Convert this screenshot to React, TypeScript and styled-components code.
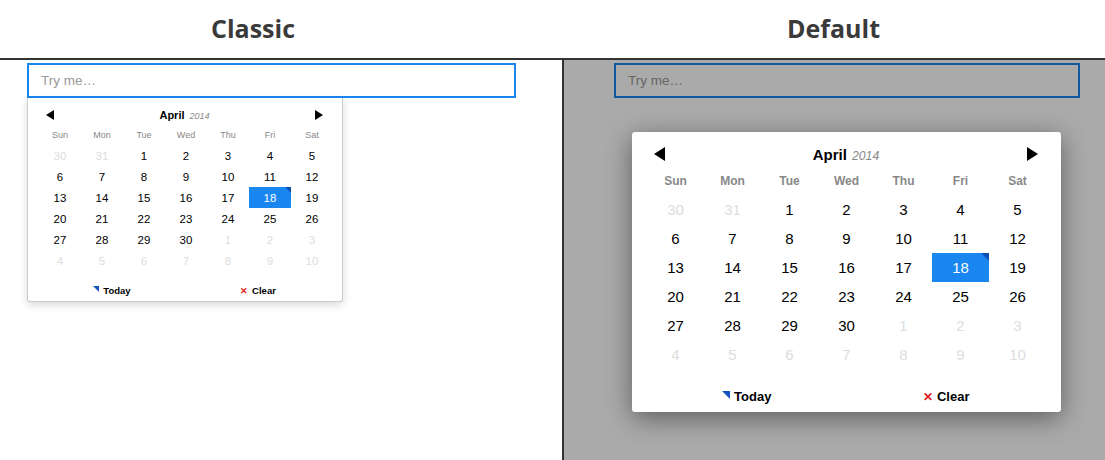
import React from "react";
import styled, { createGlobalStyle } from "styled-components";

const GlobalStyle = createGlobalStyle`
	html, body { margin: 0; padding: 0; background: #fff; }
	body { width: 1105px; height: 460px; overflow: hidden; font-family: "Liberation Sans", Arial, sans-serif; }
`;

type Size = "small" | "large";

// the two variants only differ in scale
const metrics = {
	small: { pad: "7px 11px 8px", head: 11, arrow: 5, week: 9, day: 11.5, cellW: 42, cellH: 21, foot: 9.5, headH: 19, footTop: 14 },
	large: { pad: "10px 15px 8px", head: 15, arrow: 7, week: 12, day: 15, cellW: 57, cellH: 29, foot: 13, headH: 24, footTop: 20 },
};

const Page = styled.div`
	width: 1105px;
	height: 460px;
	display: flex;
	flex-direction: column;
`;

const Titles = styled.header`
	display: grid;
	grid-template-columns: 562px 1fr;
	height: 58px;
	border-bottom: 2px solid #333;
`;

const Title = styled.h1<{ inset?: number }>`
	margin: 0;
	font-family: "Open Sans", sans-serif;
	font-weight: 700;
	font-size: 25px;
	color: #3a3a3a;
	display: flex;
	align-items: center;
	justify-content: center;
	padding: 0 ${(p) => p.inset ?? 0}px 3px 0;
`;

const Panels = styled.main`
	flex: 1;
	display: grid;
	grid-template-columns: 562px 1fr;
`;

const Panel = styled.section<{ dim?: boolean }>`
	position: relative;
	padding: 3px 0 0;
	border-left: ${(p) => (p.dim ? "2px solid #333" : "none")};
	padding-left: ${(p) => (p.dim ? "50px" : "27px")};
	background: #fff;
`;

const Input = styled.div<{ w: number }>`
	box-sizing: border-box;
	width: ${(p) => p.w}px;
	height: 35px;
	border: 2px solid #1a86f0;
	padding: 0 12px;
	display: flex;
	align-items: center;
	font-size: 13.5px;
	color: #999;
`;

const Backdrop = styled.div`
	position: absolute;
	inset: 0;
	background: rgba(0, 0, 0, 0.333);
	display: flex;
	align-items: flex-start;
	padding: 72px 0 0 68px;
`;

const Picker = styled.div<{ size: Size }>`
	box-sizing: border-box;
	background: #fff;
	padding: ${(p) => metrics[p.size].pad};
	${(p) =>
		p.size === "small"
			? `width: 316px; height: 204px; border: 1px solid #ccc; border-top: none; border-radius: 0 0 3px 3px; box-shadow: 0 3px 8px rgba(0,0,0,.15);`
			: `width: 429px; height: 280px; border-radius: 3px; box-shadow: 0 6px 26px rgba(0,0,0,.45);`}
`;

const Head = styled.div<{ size: Size }>`
	display: flex;
	align-items: center;
	justify-content: space-between;
	height: ${(p) => metrics[p.size].headH}px;
	padding: 0 8px 0 7px;
`;

const Arrow = styled.span<{ size: Size; dir: "left" | "right" }>`
	width: 0;
	height: 0;
	border-top: ${(p) => metrics[p.size].arrow}px solid transparent;
	border-bottom: ${(p) => metrics[p.size].arrow}px solid transparent;
	${(p) =>
		p.dir === "left"
			? `border-right: ${metrics[p.size].arrow * 1.6}px solid #000;`
			: `border-left: ${metrics[p.size].arrow * 1.6}px solid #000;`}
`;

const Month = styled.div<{ size: Size }>`
	font-size: ${(p) => metrics[p.size].head}px;
	font-weight: 700;
	color: #000;
	em {
		font-weight: 400;
		color: #888;
		font-size: 0.82em;
		margin-left: 5px;
	}
`;

const Grid = styled.div<{ size: Size }>`
	display: grid;
	grid-template-columns: repeat(7, ${(p) => metrics[p.size].cellW}px);
	grid-auto-rows: ${(p) => metrics[p.size].cellH}px;
`;

const WeekDay = styled.div<{ size: Size }>`
	display: flex;
	align-items: center;
	justify-content: center;
	font-size: ${(p) => metrics[p.size].week}px;
	font-weight: ${(p) => (p.size === "large" ? 700 : 400)};
	color: #888;
`;

const Day = styled.div<{ size: Size; muted?: boolean; selected?: boolean }>`
	position: relative;
	display: flex;
	align-items: center;
	justify-content: center;
	font-size: ${(p) => metrics[p.size].day}px;
	color: ${(p) => (p.selected ? "#fff" : p.muted ? "#ddd" : "#000")};
	background: ${(p) => (p.selected ? "#1a86f0" : "transparent")};
	&::after {
		content: "";
		display: ${(p) => (p.selected ? "block" : "none")};
		position: absolute;
		top: 0;
		right: 0;
		border-top: ${(p) => (p.size === "large" ? 8 : 6)}px solid #0a4fb4;
		border-left: ${(p) => (p.size === "large" ? 8 : 6)}px solid transparent;
	}
`;

const Footer = styled.div<{ size: Size }>`
	display: grid;
	grid-template-columns: 1fr 1fr;
	margin-top: ${(p) => metrics[p.size].footTop}px;
	font-size: ${(p) => metrics[p.size].foot}px;
	font-weight: 700;
	color: #000;
`;

const FootButton = styled.div`
	display: flex;
	align-items: center;
	justify-content: center;
	gap: 4px;
`;

const TodayMark = styled.span<{ size: Size }>`
	width: 0;
	height: 0;
	border-top: ${(p) => (p.size === "large" ? 8 : 6)}px solid #1553c0;
	border-left: ${(p) => (p.size === "large" ? 8 : 6)}px solid transparent;
	margin-top: -3px;
`;

const ClearMark = styled.span<{ size: Size }>`
	color: #e31b1b;
	font-size: ${(p) => (p.size === "large" ? 12 : 9)}px;
	font-weight: 700;
`;

const weekDays = ["Sun", "Mon", "Tue", "Wed", "Thu", "Fri", "Sat"];

const days: { n: number; muted?: boolean }[] = [
	{ n: 30, muted: true },
	{ n: 31, muted: true },
	...Array.from({ length: 30 }, (_, i) => ({ n: i + 1 })),
	...Array.from({ length: 10 }, (_, i) => ({ n: i + 1, muted: true })),
];

const Calendar: React.FC<{ size: Size }> = ({ size }) => (
	<Picker size={size}>
		<Head size={size}>
			<Arrow size={size} dir="left" />
			<Month size={size}>
				April<em>2014</em>
			</Month>
			<Arrow size={size} dir="right" />
		</Head>
		<Grid size={size}>
			{weekDays.map((d) => (
				<WeekDay key={d} size={size}>
					{d}
				</WeekDay>
			))}
			{days.map((d, i) => (
				<Day key={i} size={size} muted={d.muted} selected={!d.muted && d.n === 18}>
					{d.n}
				</Day>
			))}
		</Grid>
		<Footer size={size}>
			<FootButton>
				<TodayMark size={size} /> Today
			</FootButton>
			<FootButton>
				<ClearMark size={size}>✕</ClearMark> Clear
			</FootButton>
		</Footer>
	</Picker>
);

export default function App() {
	return (
		<Page>
			<GlobalStyle />
			<Titles>
				<Title inset={56}>Classic</Title>
				<Title>Default</Title>
			</Titles>
			<Panels>
				<Panel>
					<Input w={489}>Try me…</Input>
					<Calendar size="small" />
				</Panel>
				<Panel dim>
					<Input w={466}>Try me…</Input>
					<Backdrop>
						<Calendar size="large" />
					</Backdrop>
				</Panel>
			</Panels>
		</Page>
	);
}
